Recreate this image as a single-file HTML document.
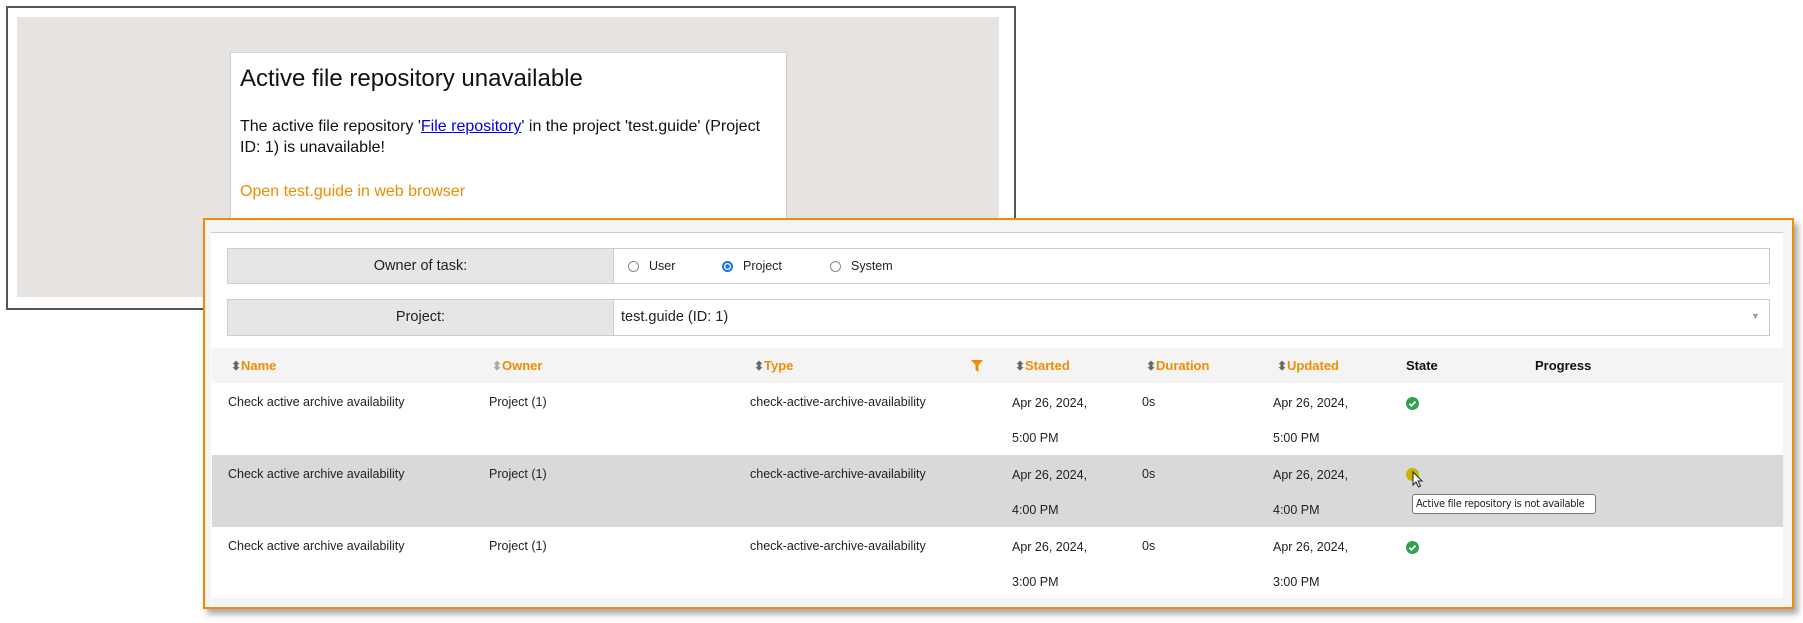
<!DOCTYPE html>
<html><head><meta charset="utf-8"><style>
body{margin:0;width:1803px;height:623px;background:#fff;position:relative;overflow:hidden;font-family:"Liberation Sans",sans-serif;}
.abs{position:absolute}
.t{position:absolute;font-size:12.5px;color:#222;white-space:nowrap}
.h{position:absolute;font-size:13px;font-weight:bold;color:#f08c00;white-space:nowrap}
.ar{font-size:12px;color:#666;margin-right:1px;vertical-align:0px;display:inline-block;width:9px}
.rad{display:inline-block;width:11px;height:11px;border:1.5px solid #888;border-radius:50%;vertical-align:-2px;margin-right:10px;box-sizing:border-box}
</style></head><body>
<div class="abs" style="left:6px;top:6px;width:1006px;height:300px;border:2px solid #555;background:#fff"></div>
<div class="abs" style="left:17px;top:17px;width:982px;height:280px;background:#e6e3e0"></div>
<div class="abs" style="left:230px;top:52px;width:555px;height:180px;background:#fff;border:1px solid #d0d0d0"></div>
<div class="t" style="left:240px;top:65px;font-size:24px;color:#111">Active file repository unavailable</div>
<div class="t" style="left:240px;top:116px;font-size:16px;color:#111;line-height:21px">The active file repository '<span style="color:#00e;text-decoration:underline">File repository</span>' in the project 'test.guide' (Project<br>ID: 1) is unavailable!</div>
<div class="t" style="left:240px;top:183px;font-size:16px;color:#f08c00">Open test.guide in web browser</div>

<div class="abs" style="left:203px;top:218px;width:1587px;height:387px;border:2px solid #f08c00;background:#f4f4f4;box-shadow:4px 5px 6px rgba(0,0,0,0.35)"></div>
<div class="abs" style="left:211px;top:232px;width:1572px;height:374px;background:#fff;border-top:1px solid #ccc"></div>

<div class="abs" style="left:227px;top:248px;width:1541px;height:34px;border:1px solid #ccc;background:#fff"></div>
<div class="abs" style="left:228px;top:249px;width:385px;height:34px;background:#e6e6e6;border-right:1px solid #ccc"></div>
<div class="t" style="left:228px;top:258px;width:385px;text-align:center;font-size:14.5px">Owner of task:</div>
<div class="t" style="left:628px;top:259px;font-size:12.5px"><span class="rad"></span>User</div>
<div class="t" style="left:722px;top:259px;font-size:12.5px"><span class="rad" style="border:2px solid #1a73e8;background:radial-gradient(#1a73e8 2px,#fff 2.5px)"></span>Project</div>
<div class="t" style="left:830px;top:259px;font-size:12.5px"><span class="rad"></span>System</div>

<div class="abs" style="left:227px;top:299px;width:1541px;height:35px;border:1px solid #ccc;background:#fff"></div>
<div class="abs" style="left:228px;top:300px;width:385px;height:35px;background:#e6e6e6;border-right:1px solid #ccc"></div>
<div class="t" style="left:228px;top:309px;width:385px;text-align:center;font-size:14.5px">Project:</div>
<div class="t" style="left:621px;top:309px;font-size:14.5px">test.guide (ID: 1)</div>
<div class="t" style="left:1751px;top:311px;font-size:9px;color:#999">▼</div>

<div class="abs" style="left:212px;top:348px;width:1571px;height:35px;background:#f4f4f4"></div>
<div class="h" style="left:231px;top:358px"><span class="ar">⬍</span>Name</div>
<div class="h" style="left:492px;top:358px"><span class="ar" style="color:#aaa">⬍</span>Owner</div>
<div class="h" style="left:754px;top:358px"><span class="ar">⬍</span>Type</div>
<svg class="abs" style="left:970px;top:359px" width="14" height="14" viewBox="0 0 14 14"><path d="M1 1h12l-4.5 5v7l-3-2V6z" fill="#f08c00"/></svg>
<div class="h" style="left:1015px;top:358px"><span class="ar">⬍</span>Started</div>
<div class="h" style="left:1146px;top:358px"><span class="ar">⬍</span>Duration</div>
<div class="h" style="left:1277px;top:358px"><span class="ar">⬍</span>Updated</div>
<div class="h" style="left:1406px;top:358px;color:#111">State</div>
<div class="h" style="left:1535px;top:358px;color:#111">Progress</div>

<div class="abs" style="left:212px;top:455px;width:1571px;height:72px;background:#d9d9d9"></div>
<div class="abs" style="left:212px;top:598px;width:1571px;height:8px;background:#f4f4f4"></div>

<div class="t" style="left:228px;top:395px">Check active archive availability</div>
<div class="t" style="left:489px;top:395px">Project (1)</div>
<div class="t" style="left:750px;top:395px">check-active-archive-availability</div>
<div class="t" style="left:1012px;top:386px;line-height:35px">Apr 26, 2024,<br>5:00 PM</div>
<div class="t" style="left:1142px;top:395px">0s</div>
<div class="t" style="left:1273px;top:386px;line-height:35px">Apr 26, 2024,<br>5:00 PM</div>
<svg class="abs" style="left:1406px;top:397px" width="13" height="13" viewBox="0 0 13 13"><circle cx="6.5" cy="6.5" r="6.5" fill="#2ea44f"/><path d="M3.5 6.8l2 2 4-4.2" stroke="#fff" stroke-width="1.8" fill="none"/></svg>

<div class="t" style="left:228px;top:467px">Check active archive availability</div>
<div class="t" style="left:489px;top:467px">Project (1)</div>
<div class="t" style="left:750px;top:467px">check-active-archive-availability</div>
<div class="t" style="left:1012px;top:458px;line-height:35px">Apr 26, 2024,<br>4:00 PM</div>
<div class="t" style="left:1142px;top:467px">0s</div>
<div class="t" style="left:1273px;top:458px;line-height:35px">Apr 26, 2024,<br>4:00 PM</div>
<svg class="abs" style="left:1406px;top:468px" width="20" height="22" viewBox="0 0 20 22"><circle cx="6.5" cy="6.5" r="6.5" fill="#c8b400"/><path d="M7 4l0 13 3-3 2.5 5 2-1-2.5-5h4z" fill="#fff" stroke="#222" stroke-width="1"/></svg>
<div class="abs" style="left:1412px;top:494px;width:179px;height:18px;border:1px solid #777;border-radius:3px;background:#fff;font-size:11px;line-height:18px;padding-left:3px;white-space:nowrap;font-family:'DejaVu Sans Condensed','Liberation Sans Narrow',sans-serif;color:#222;letter-spacing:-0.3px">Active file repository is not available</div>

<div class="t" style="left:228px;top:539px">Check active archive availability</div>
<div class="t" style="left:489px;top:539px">Project (1)</div>
<div class="t" style="left:750px;top:539px">check-active-archive-availability</div>
<div class="t" style="left:1012px;top:530px;line-height:35px">Apr 26, 2024,<br>3:00 PM</div>
<div class="t" style="left:1142px;top:539px">0s</div>
<div class="t" style="left:1273px;top:530px;line-height:35px">Apr 26, 2024,<br>3:00 PM</div>
<svg class="abs" style="left:1406px;top:541px" width="13" height="13" viewBox="0 0 13 13"><circle cx="6.5" cy="6.5" r="6.5" fill="#2ea44f"/><path d="M3.5 6.8l2 2 4-4.2" stroke="#fff" stroke-width="1.8" fill="none"/></svg>
</body></html>
